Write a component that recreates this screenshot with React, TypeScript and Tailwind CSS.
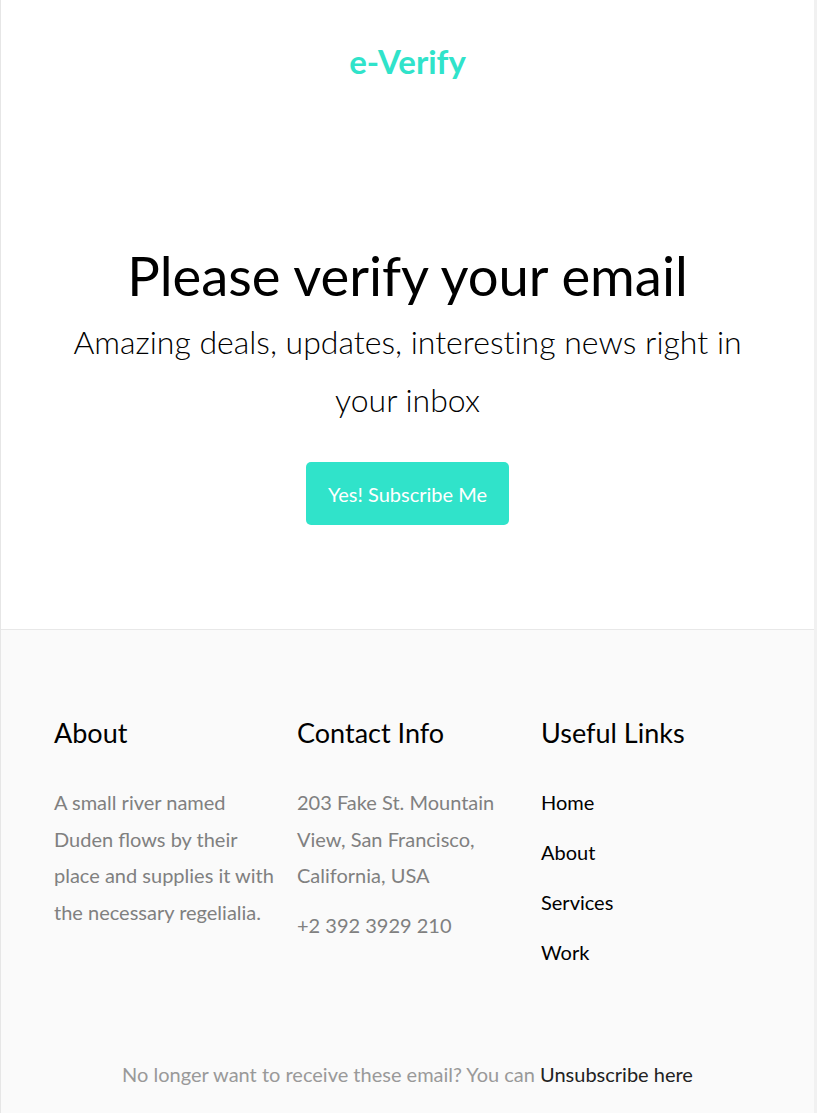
import React from 'react';

const links = ['Home', 'About', 'Services', 'Work'];

const App: React.FC = () => {
  return (
    <div className="min-h-[1113px] w-full bg-[#f1f1f1] font-['Lato','Open_Sans',sans-serif]">
      <div className="w-[814px] border-l border-[#e6e6e6]">
        {/* Top: logo + hero */}
        <div className="bg-white pt-[41px] pb-[104px] text-center">
          <h1 className="text-[33px] font-bold leading-[40px] text-[#30e3ca]">e-Verify</h1>

          <div className="pt-[156px] px-[54px]">
            <h2 className="text-[54.4px] font-normal leading-[76px] text-black">Please verify your email</h2>
            <h3 className="text-[32px] font-light leading-[58px] text-black [font-variant-ligatures:none]">
              Amazing deals, updates, interesting news right in your inbox
            </h3>
            <div className="pt-[33px]">
              <a className="inline-block rounded-[5px] bg-[#30e3ca] px-[22px] py-[13.5px] text-[20px] leading-[36px] text-white">
                Yes! Subscribe Me
              </a>
            </div>
          </div>
        </div>

        {/* Footer */}
        <div className="border-t border-[#e8e8e8] bg-[#fafafa]">
          <div className="grid grid-cols-[243px_244px_1fr] pl-[53px] pr-[54px] pt-[84px]">
            <div className="pr-[19px]">
              <h3 className="text-[27px] leading-[38px] text-black">About</h3>
              <p className="mt-[32px] text-[20px] leading-[36.5px] text-[#808080]">
                A small river named Duden flows by their place and supplies it with the necessary regelialia.
              </p>
            </div>
            <div className="pr-[19px]">
              <h3 className="text-[27px] leading-[38px] text-black">Contact Info</h3>
              <div className="mt-[32px] text-[20px] leading-[36.5px] text-[#808080]">
                <p className="mb-[13.5px]">203 Fake St. Mountain View, San Francisco, California, USA</p>
                <p>+2 392 3929 210</p>
              </div>
            </div>
            <div>
              <h3 className="text-[27px] leading-[38px] text-black">Useful Links</h3>
              <ul className="mt-[32px] text-[20px] leading-[36.5px] text-black">
                {links.map((l) => (
                  <li key={l} className="mb-[13.5px]">
                    <a>{l}</a>
                  </li>
                ))}
              </ul>
            </div>
          </div>

          <div className="pt-[72px] pb-[20px] text-center text-[20px] leading-[36.5px] text-[#999999]">
            No longer want to receive these email? You can <a className="text-[#222222]">Unsubscribe here</a>
          </div>
        </div>
      </div>
    </div>
  );
};

export default App;
